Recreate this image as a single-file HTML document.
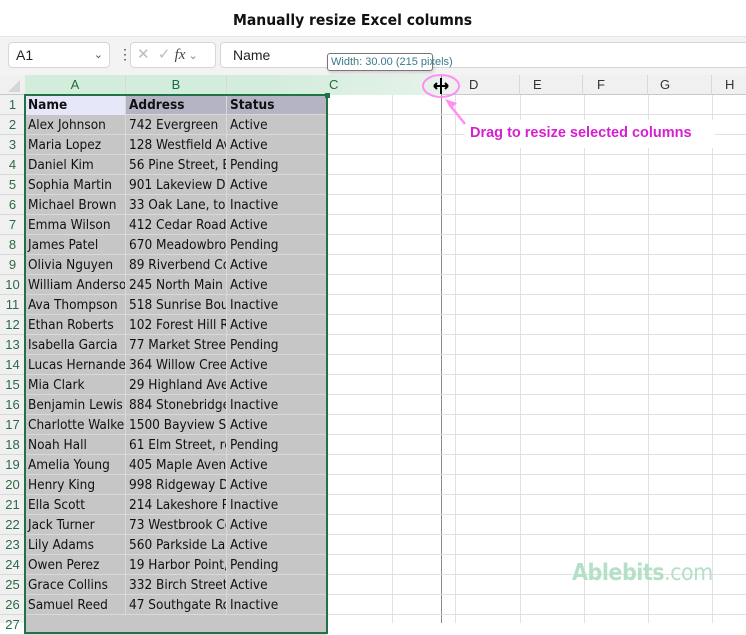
<!DOCTYPE html>
<html><head><meta charset="utf-8"><style>
*{margin:0;padding:0;box-sizing:border-box}
body{width:746px;height:623px;overflow:hidden;background:#fff;position:relative;font-family:"Liberation Sans",Arial,sans-serif}
.a{position:absolute}
.title{left:233px;top:11px;font-weight:bold;font-size:15.5px;color:#111;font-family:"DejaVu Sans Condensed","Liberation Sans",sans-serif;white-space:nowrap}
.fbar{left:0;top:36px;width:746px;height:39px;background:#f3f3f3;border-top:1px solid #e4e4e4}
.box{background:#fff;border:1px solid #d6d6d6;border-radius:4px;height:26px;top:42px}
.hdr{top:75px;height:20px;background:#f0f0f0;border-bottom:1px solid #c8c8c8;left:0;width:746px}
.ch{top:75px;height:20px;font-size:13px;color:#333;line-height:20px;border-right:1px solid #d8d8d8}
.rn{left:0;width:25px;height:20px;font-size:13px;color:#2a6a44;text-align:center;line-height:20px;border-bottom:1px solid #d8d8d8}
.row{left:25px;width:302px;height:20px;background:#c6c6c6;border-bottom:1px solid #d9d9d9;font-family:"DejaVu Sans Condensed","Liberation Sans",sans-serif;font-size:13.5px;line-height:20px;color:#111}
.row span{position:absolute;top:0;overflow:hidden;white-space:nowrap;padding-left:3px;height:20px;border-right:1px solid #d9d9d9}
.s1{left:0;width:101px}.s2{left:101px;width:101px}.s3{left:202px;width:101px}
.gh{left:327px;width:419px;height:1px;background:#e1e1e1}
.gv{top:95px;width:1px;height:528px;background:#e1e1e1}
</style></head><body>
<div class="a title">Manually resize Excel columns</div>
<div class="a fbar"></div>
<div class="a box" style="left:8px;width:102px;font-size:14px;line-height:24px;padding-left:7px;color:#222">A1<span style="position:absolute;right:6px;top:0;font-size:11px;color:#555">&#8964;</span></div>
<div class="a" style="left:118px;top:47px;font-size:14px;color:#444;line-height:14px">&#8942;</div>
<div class="a box" style="left:130px;width:86px;font-size:15px;line-height:24px;color:#bbb;padding-left:6px">✕ &nbsp;✓ <i style="color:#444;font-family:'Liberation Serif',serif">fx</i><span style="font-size:11px;color:#888"> &#8964;</span></div>
<div class="a box" style="left:220px;width:540px;font-size:14px;line-height:24px;padding-left:12px;color:#222">Name</div>
<div class="a hdr"></div>
<div class="a" style="left:25px;top:75px;width:416px;height:20px;background:linear-gradient(90deg,#d3eddc 60%,#e6f2ea)"></div>
<div class="a" style="left:8px;top:80px;width:0;height:0;border-left:12px solid transparent;border-bottom:12px solid #d6d6d6"></div>
<div class="a ch" style="left:25px;width:101px;text-align:center;color:#1f6b3e">A</div>
<div class="a ch" style="left:126px;width:101px;text-align:center;color:#1f6b3e">B</div>
<div class="a ch" style="left:227px;width:214px;padding-left:102px;color:#1f6b3e;border-right:none">C</div>
<div class="a ch" style="left:455px;width:65px;padding-left:14px">D</div>
<div class="a ch" style="left:520px;width:63px;padding-left:13px">E</div>
<div class="a ch" style="left:583px;width:65px;padding-left:14px">F</div>
<div class="a ch" style="left:648px;width:64px;padding-left:12px">G</div>
<div class="a ch" style="left:712px;width:40px;padding-left:13px">H</div>
<div class="a" style="left:0;top:95px;width:25px;height:528px;background:#f0f0f0;border-right:1px solid #c8c8c8"></div>
<div class="a gv" style="left:392px"></div><div class="a gv" style="left:455px"></div><div class="a gv" style="left:520px"></div><div class="a gv" style="left:584px"></div><div class="a gv" style="left:648px"></div><div class="a gv" style="left:712px"></div>
<div class="a" style="left:441px;top:75px;width:1px;height:548px;background:#888"></div>
<div class="a rn" style="top:95px">1</div><div class="a row" style="top:95px;background:#b4b4c4;font-weight:bold"><span class="s1" style="background:#e7e7fa">Name</span><span class="s2">Address</span><span class="s3">Status</span></div>
<div class="a rn" style="top:115px">2</div><div class="a row" style="top:115px"><span class="s1">Alex Johnson</span><span class="s2">742 Evergreen</span><span class="s3">Active</span></div>
<div class="a rn" style="top:135px">3</div><div class="a row" style="top:135px"><span class="s1">Maria Lopez</span><span class="s2">128 Westfield Av</span><span class="s3">Active</span></div>
<div class="a rn" style="top:155px">4</div><div class="a row" style="top:155px"><span class="s1">Daniel Kim</span><span class="s2">56 Pine Street, B</span><span class="s3">Pending</span></div>
<div class="a rn" style="top:175px">5</div><div class="a row" style="top:175px"><span class="s1">Sophia Martin</span><span class="s2">901 Lakeview Dr</span><span class="s3">Active</span></div>
<div class="a rn" style="top:195px">6</div><div class="a row" style="top:195px"><span class="s1">Michael Brown</span><span class="s2">33 Oak Lane, tow</span><span class="s3">Inactive</span></div>
<div class="a rn" style="top:215px">7</div><div class="a row" style="top:215px"><span class="s1">Emma Wilson</span><span class="s2">412 Cedar Road,</span><span class="s3">Active</span></div>
<div class="a rn" style="top:235px">8</div><div class="a row" style="top:235px"><span class="s1">James Patel</span><span class="s2">670 Meadowbroo</span><span class="s3">Pending</span></div>
<div class="a rn" style="top:255px">9</div><div class="a row" style="top:255px"><span class="s1">Olivia Nguyen</span><span class="s2">89 Riverbend Co</span><span class="s3">Active</span></div>
<div class="a rn" style="top:275px">10</div><div class="a row" style="top:275px"><span class="s1">William Anderson</span><span class="s2">245 North Main</span><span class="s3">Active</span></div>
<div class="a rn" style="top:295px">11</div><div class="a row" style="top:295px"><span class="s1">Ava Thompson</span><span class="s2">518 Sunrise Bou</span><span class="s3">Inactive</span></div>
<div class="a rn" style="top:315px">12</div><div class="a row" style="top:315px"><span class="s1">Ethan Roberts</span><span class="s2">102 Forest Hill R</span><span class="s3">Active</span></div>
<div class="a rn" style="top:335px">13</div><div class="a row" style="top:335px"><span class="s1">Isabella Garcia</span><span class="s2">77 Market Street</span><span class="s3">Pending</span></div>
<div class="a rn" style="top:355px">14</div><div class="a row" style="top:355px"><span class="s1">Lucas Hernandez</span><span class="s2">364 Willow Cree</span><span class="s3">Active</span></div>
<div class="a rn" style="top:375px">15</div><div class="a row" style="top:375px"><span class="s1">Mia Clark</span><span class="s2">29 Highland Ave</span><span class="s3">Active</span></div>
<div class="a rn" style="top:395px">16</div><div class="a row" style="top:395px"><span class="s1">Benjamin Lewis</span><span class="s2">884 Stonebridge</span><span class="s3">Inactive</span></div>
<div class="a rn" style="top:415px">17</div><div class="a row" style="top:415px"><span class="s1">Charlotte Walker</span><span class="s2">1500 Bayview St</span><span class="s3">Active</span></div>
<div class="a rn" style="top:435px">18</div><div class="a row" style="top:435px"><span class="s1">Noah Hall</span><span class="s2">61 Elm Street, re</span><span class="s3">Pending</span></div>
<div class="a rn" style="top:455px">19</div><div class="a row" style="top:455px"><span class="s1">Amelia Young</span><span class="s2">405 Maple Aven</span><span class="s3">Active</span></div>
<div class="a rn" style="top:475px">20</div><div class="a row" style="top:475px"><span class="s1">Henry King</span><span class="s2">998 Ridgeway Dr</span><span class="s3">Active</span></div>
<div class="a rn" style="top:495px">21</div><div class="a row" style="top:495px"><span class="s1">Ella Scott</span><span class="s2">214 Lakeshore R</span><span class="s3">Inactive</span></div>
<div class="a rn" style="top:515px">22</div><div class="a row" style="top:515px"><span class="s1">Jack Turner</span><span class="s2">73 Westbrook Co</span><span class="s3">Active</span></div>
<div class="a rn" style="top:535px">23</div><div class="a row" style="top:535px"><span class="s1">Lily Adams</span><span class="s2">560 Parkside Lan</span><span class="s3">Active</span></div>
<div class="a rn" style="top:555px">24</div><div class="a row" style="top:555px"><span class="s1">Owen Perez</span><span class="s2">19 Harbor Point,</span><span class="s3">Pending</span></div>
<div class="a rn" style="top:575px">25</div><div class="a row" style="top:575px"><span class="s1">Grace Collins</span><span class="s2">332 Birch Street,</span><span class="s3">Active</span></div>
<div class="a rn" style="top:595px">26</div><div class="a row" style="top:595px"><span class="s1">Samuel Reed</span><span class="s2">47 Southgate Ro</span><span class="s3">Inactive</span></div>
<div class="a rn" style="top:615px">27</div><div class="a row" style="top:615px"></div>
<div class="a gh" style="top:114px"></div><div class="a gh" style="top:134px"></div><div class="a gh" style="top:154px"></div><div class="a gh" style="top:174px"></div><div class="a gh" style="top:194px"></div><div class="a gh" style="top:214px"></div><div class="a gh" style="top:234px"></div><div class="a gh" style="top:254px"></div><div class="a gh" style="top:274px"></div><div class="a gh" style="top:294px"></div><div class="a gh" style="top:314px"></div><div class="a gh" style="top:334px"></div><div class="a gh" style="top:354px"></div><div class="a gh" style="top:374px"></div><div class="a gh" style="top:394px"></div><div class="a gh" style="top:414px"></div><div class="a gh" style="top:434px"></div><div class="a gh" style="top:454px"></div><div class="a gh" style="top:474px"></div><div class="a gh" style="top:494px"></div><div class="a gh" style="top:514px"></div><div class="a gh" style="top:534px"></div><div class="a gh" style="top:554px"></div><div class="a gh" style="top:574px"></div><div class="a gh" style="top:594px"></div><div class="a gh" style="top:614px"></div>
<div class="a" style="left:24px;top:94px;width:304px;height:540px;border:2px solid #217346"></div>
<div class="a" style="left:325px;top:93px;width:5px;height:5px;background:#217346"></div>
<div class="a" style="left:465px;top:120px;width:250px;height:28px;background:#fff"></div>
<div class="a" style="left:470px;top:125px;font-weight:bold;font-size:14.5px;color:#d61fd0">Drag to resize selected columns</div>
<svg class="a" style="left:415px;top:70px" width="80" height="60">
<ellipse cx="26" cy="16" rx="18" ry="11" fill="none" stroke="#ff8ef5" stroke-width="2"/>
<path d="M26 8v16M19 16h14M19 16l3-3M19 16l3 3M33 16l-3-3M33 16l-3 3" stroke="#000" stroke-width="2" fill="none"/>
<path d="M50 54L34 34" stroke="#ff8ef5" stroke-width="2.5"/>
<path d="M30 29l12 4-6 6z" fill="#ff8ef5"/>
</svg>
<div class="a" style="left:327px;top:53px;width:106px;height:18px;background:#fff;border:1px solid #777;border-radius:3px;font-size:11px;line-height:16px;color:#3a7a8a;padding-left:3px;box-shadow:1px 2px 3px rgba(0,0,0,.15);white-space:nowrap;font-family:'Liberation Sans',sans-serif">Width: 30.00 (215 pixels)</div>
<div class="a" style="left:572px;top:560px;font-size:23px;color:#b4e0c7;font-weight:bold;letter-spacing:-0.5px;font-family:'DejaVu Sans Condensed','Liberation Sans',sans-serif">Ablebits<span style="font-weight:normal">.com</span></div>
</body></html>
